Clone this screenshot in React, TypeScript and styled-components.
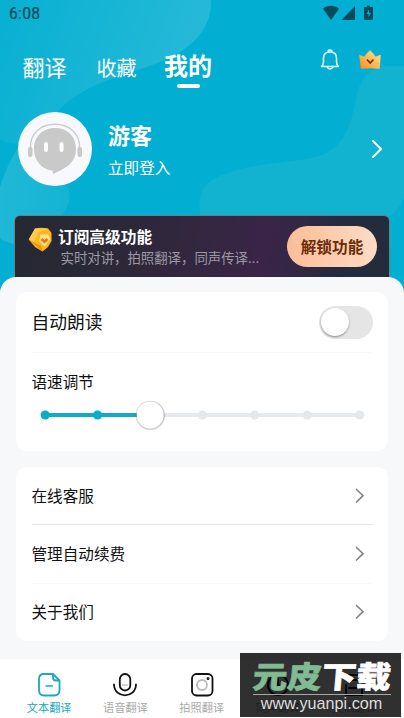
import React from "react";
import styled, { createGlobalStyle } from "styled-components";

const Global = createGlobalStyle`
  * { box-sizing: border-box; }
  html, body { margin: 0; padding: 0; }
  body {
    font-family: "Noto Sans CJK SC", "Noto Sans", sans-serif;
    background: #f7f8fa;
    overflow: hidden;
  }
`;

const Screen = styled.div`
  position: relative;
  display: flex;
  flex-direction: column;
  width: 404px;
  height: 718px;
  overflow: hidden;
  background: #f7f8fa;
`;

const Hero = styled.header`
  position: relative;
  flex: none;
  height: 293px;
  background: #02aed1;
`;

const HeroPattern = styled.svg`
  position: absolute;
  inset: 0;
  width: 404px;
  height: 293px;
`;

const HeroContent = styled.div`
  position: relative;
  display: flex;
  flex-direction: column;
`;

const StatusBar = styled.div`
  display: flex;
  justify-content: space-between;
  height: 28px;
  padding: 0 30px 0 9px;
  color: #064a5c;
`;

const Clock = styled.span`
  font: 400 15.6px/29px Roboto, sans-serif;
  letter-spacing: 0.3px;
  -webkit-text-stroke: 0.2px currentColor;
`;

const StatusIcons = styled.svg`
  width: 52px;
  height: 28px;
`;

const TopNav = styled.nav`
  display: flex;
  align-items: flex-start;
  height: 72px;
  padding: 20px 22px 0 22.5px;
  color: #fff;
`;

const NavTab = styled.div<{ $size: number; $left?: number; $drop?: number; $active?: boolean }>`
  display: flex;
  flex-direction: column;
  align-items: center;
  gap: 3px;
  margin-left: ${(p) => p.$left ?? 0}px;
  padding-top: ${(p) => p.$drop ?? 0}px;
  font-size: ${(p) => p.$size}px;
  font-weight: ${(p) => (p.$active ? 700 : 400)};
  line-height: ${(p) => (p.$active ? 33 : 32)}px;
  white-space: nowrap;
`;

const Underline = styled.i`
  width: 23px;
  height: 4px;
  border-radius: 2px;
  background: #fff;
`;

const NavActions = styled.div`
  display: flex;
  gap: 18px;
  margin-left: auto;
`;

const Profile = styled.section`
  display: flex;
  align-items: flex-start;
  height: 115px;
  padding: 12px 21px 0 18px;
  color: #fff;
`;

const Avatar = styled.svg`
  flex: none;
  width: 74px;
  height: 74px;
`;

const ProfileText = styled.div`
  display: flex;
  flex-direction: column;
  flex: 1;
  margin-left: 16px;
`;

const UserName = styled.strong`
  font-size: 22px;
  line-height: 32px;
  margin-top: 6px;
`;

const LoginHint = styled.span`
  font-size: 15.6px;
  line-height: 24px;
  margin-top: 5px;
`;

const ProfileArrow = styled.svg`
  width: 12px;
  height: 20px;
  margin-top: 27px;
`;

const Promo = styled.section`
  display: flex;
  align-items: flex-start;
  width: 376px;
  height: 78px;
  margin-left: 14px;
  padding: 0 12px 0 13px;
  border: 1px solid #6d7f8a;
  border-radius: 6px 6px 0 0;
  background: linear-gradient(100deg, #252932 0%, #2c2838 30%, #3a2547 66%, #242b3d 88%, #222b3c 100%);
`;

const Gem = styled.svg`
  flex: none;
  width: 26px;
  height: 26px;
  margin-top: 11px;
`;

const PromoText = styled.div`
  display: flex;
  flex-direction: column;
  flex: 1;
  margin-left: 4px;
`;

const PromoTitle = styled.strong`
  margin-top: 10px;
  color: #fff;
  font-size: 15.7px;
  line-height: 22px;
`;

const PromoSub = styled.span`
  padding-left: 2.5px;
  color: #9c98a5;
  font-size: 13.4px;
  line-height: 18px;
  white-space: nowrap;
`;

const UnlockButton = styled.button`
  width: 90px;
  height: 41px;
  margin-top: 10px;
  padding: 0;
  border: 0;
  border-radius: 21px;
  background: linear-gradient(90deg, #fabe98, #fcdcc4);
  color: #6d2d0b;
  font: 700 15.7px/40px "Noto Sans CJK SC", sans-serif;
`;

const Sheet = styled.main`
  position: relative;
  display: flex;
  flex-direction: column;
  flex: 1;
  gap: 16px;
  margin-top: -16px;
  padding: 15px 16px 0;
  border-radius: 16px 16px 0 0;
  background: #f7f8fa;
`;

const Card = styled.section`
  padding: 0 15px 0 15.5px;
  border-radius: 11px;
  background: #fff;
  color: #111;
`;

const SettingsCard = styled(Card)`
  height: 159px;
`;

const ToggleRow = styled.div`
  display: flex;
  align-items: center;
  justify-content: space-between;
  height: 61px;
  border-bottom: 1px solid #f8f8f9;
  font-size: 17.8px;
`;

const Switch = styled.div`
  width: 54px;
  height: 33px;
  padding: 2px;
  border-radius: 17px;
  background: #e5e5e5;
`;

const SwitchKnob = styled.i`
  display: block;
  width: 28px;
  height: 28px;
  border-radius: 50%;
  background: #fff;
  box-shadow: 0 1px 2px #0006;
`;

const SpeedLabel = styled.div`
  height: 24px;
  margin-top: 17px;
  font-size: 15.6px;
  line-height: 22px;
`;

const Slider = styled.svg`
  display: block;
  width: 340px;
  height: 40px;
`;

const MenuCard = styled(Card)`
  height: 174px;
`;

const MenuRow = styled.div<{ $line?: string }>`
  display: flex;
  align-items: center;
  justify-content: space-between;
  height: 58.3px;
  padding-right: 8px;
  border-bottom: 1px solid ${(p) => p.$line ?? "transparent"};
  font-size: 15.6px;
`;

const MenuLabel = styled.span`
  padding-bottom: 2px;
  line-height: 24px;
`;

const MenuArrow = styled.svg`
  width: 10px;
  height: 16px;
`;

const TabBar = styled.nav`
  position: relative;
  display: grid;
  flex: none;
  grid-template-columns: repeat(5, 76.3px);
  height: 59px;
  padding: 12px 0 0 11px;
  background: #fff;
`;

const Tab = styled.div<{ $active?: boolean }>`
  display: flex;
  flex-direction: column;
  align-items: center;
  color: ${(p) => (p.$active ? "#1ba6bd" : "#aaa")};
  font-size: 11.2px;
  line-height: 17px;
`;

const TabIcon = styled.svg`
  width: 28px;
  height: 28px;
`;

const Watermark = styled.aside`
  position: absolute;
  left: 240px;
  top: 653px;
  display: flex;
  flex-direction: column;
  align-items: center;
  width: 161px;
  height: 64px;
  padding: 8px 9px 0 11px;
  background: rgba(0, 0, 0, 0.81);
  color: #fff;
`;

const WatermarkTitle = styled.div`
  height: 34px;
  border-bottom: 1px solid #a3aaa6;
  font-size: 34.5px;
  font-weight: 900;
  line-height: 29px;
  white-space: nowrap;
`;

const Slanted = styled.span<{ $green?: boolean }>`
  display: inline-block;
  color: ${(p) => (p.$green ? "#80bb93" : "#fff")};
  -webkit-text-stroke: 0.7px currentColor;
  transform: skewX(-5deg) scaleY(0.88);
`;

const WatermarkUrl = styled.div`
  color: #ddd;
  font: 16.2px/16px "Liberation Sans", sans-serif;
`;

const menu = [
  { label: "在线客服", line: "#e5e6e7" },
  { label: "管理自动续费", line: "#f8f9f9" },
  { label: "关于我们" },
];

const iconProps = { viewBox: "0 0 28 28", fill: "none", stroke: "#111", strokeWidth: 1.8, strokeLinecap: "round" as const };

export default function App() {
  return (
    <Screen>
      <Global />
      <Hero>
        <HeroPattern viewBox="0 0 404 293">
          <defs>
            <linearGradient id="wave" x1="0" y1="0.3" x2="0.8" y2="0.5">
              <stop offset="0" stopColor="#fff" stopOpacity="0.03" />
              <stop offset="1" stopColor="#fff" stopOpacity="0.13" />
            </linearGradient>
            <linearGradient id="pool" x1="0" y1="0" x2="1" y2="0">
              <stop offset="0" stopColor="#fff" stopOpacity="0.12" />
              <stop offset="1" stopColor="#fff" stopOpacity="0.07" />
            </linearGradient>
          </defs>
          <path d="M0 0H211C212 18 203 36 187 47C168 64 130 70 98 84C70 97 58 109 50 122C40 139 20 151 0 139Z" fill="url(#wave)" />
          <path d="M0 187Q7 165 18 147L55 180C67 183 72 190 69 202C64 220 37 240 14 244Q4 242 0 238Z" fill="url(#pool)" />
          <path d="M404 66H387C370 67 361 78 357 94C352 120 347 144 324 154C300 164 263 160 225 174C202 182 196 197 201 217H389Q397 213 404 198Z" fill="#12b3d0" />
        </HeroPattern>
        <HeroContent>
          <StatusBar>
            <Clock>6:08</Clock>
            <StatusIcons viewBox="0 0 52 28" fill="currentColor">
              <path d="M1 8.7C5.500 4.900 12.500 4.900 17 8.700L9 20Z" />
              <path d="M33 6V20H19.500Z" />
              <path d="M43 7h2V5.800h3V7h2q1 0 1 1v11q0 1-1 1h-7q-1 0-1-1V8q0-1 1-1Z" />
              <path d="M47 9.500L44.500 14H46.500V17.500L49 12.800H47Z" fill="#02aed1" />
            </StatusIcons>
          </StatusBar>
          <TopNav>
            <NavTab $size={22} $drop={2}>翻译</NavTab>
            <NavTab $size={20} $left={30} $drop={4}>收藏</NavTab>
            <NavTab $size={24} $left={27.500} $active>
              我的
              <Underline />
            </NavTab>
            <NavActions>
              <svg width="20" height="24" viewBox="0 0 20 24" fill="none" stroke="#e6ffff" strokeWidth="1.500" strokeLinejoin="round">
                <path d="M1.500 18.500Q3.500 16.500 3.500 14V10Q3.500 4 10 4T16.500 10V14Q16.500 16.500 18.500 18.500Z" />
                <path d="M8 4Q8 2 10 2T12 4M7 19Q8 21 10 21T13 19" />
              </svg>
              <svg width="24" height="24" viewBox="0 0 24 24">
                <defs>
                  <linearGradient id="crown" x1="1" y1="0" x2="0" y2="1">
                    <stop offset="0.300" stopColor="#ffcf70" />
                    <stop offset="1" stopColor="#ff8a18" />
                  </linearGradient>
                </defs>
                <path d="M1.500 7L6.500 9L8.500 6L12 2.500L15.500 6L17.500 9L22.500 7L21.500 20.500Q12 19.500 3 20.500Z" fill="url(#crown)" stroke="url(#crown)" strokeWidth="0.500" strokeLinejoin="round" />
                <path d="M9 11.500L12.200 15L15.500 11.500" fill="none" stroke="#70350a" strokeWidth="1.800" />
              </svg>
            </NavActions>
          </TopNav>
          <Profile>
            <Avatar viewBox="0 0 74 74">
              <circle cx="37" cy="37" r="37" fill="#f7f9fc" />
              <path d="M12.500 37C10 4 64 4 61.500 37" fill="none" stroke="#cdcdcd" strokeWidth="1.500" />
              <rect x="10" y="35" width="4.500" height="10" rx="2" fill="#c9c9c9" />
              <rect x="59.500" y="35" width="4.500" height="10" rx="2" fill="#c9c9c9" />
              <path d="M37 16C23 16 16 26 16 37C16 49 25 58 34 58.500Q35 59 35 62Q44 58 49 54.500C55 50 58 44 58 37C58 26 51 16 37 16Z" fill="#c9c9c9" />
              <rect x="26" y="30" width="4" height="10" rx="2" fill="#fff" />
              <rect x="41.500" y="30" width="4" height="10" rx="2" fill="#fff" />
            </Avatar>
            <ProfileText>
              <UserName>游客</UserName>
              <LoginHint>立即登入</LoginHint>
            </ProfileText>
            <ProfileArrow viewBox="0 0 12 20" fill="none" stroke="#fff" strokeWidth="2" strokeLinecap="round" strokeLinejoin="round">
              <path d="M2 2L10 10L2 18" />
            </ProfileArrow>
          </Profile>
          <Promo>
            <Gem viewBox="0 0 26 26">
              <path d="M7 1.500Q13 0 20 1.500L23.500 6V14L20 20L14.500 24.500L7 20L0.800 12.500Z" fill="#ffb51e" />
              <path d="M7 1.500L0.800 12.500L6 15.500L10 6L20 1.500Z" fill="#ffcb4e" />
              <path d="M0.800 12.500L14.500 24.500L13 19L6 15.500Z" fill="#ef8d18" />
              <path d="M12.500 7.500H20L22.500 12L16.500 19.500L11 14Z" fill="#ffe286" />
              <path d="M13.500 12L16.500 14.800L19.500 12" stroke="#ee701d" strokeWidth="2.600" fill="none" />
            </Gem>
            <PromoText>
              <PromoTitle>订阅高级功能</PromoTitle>
              <PromoSub>实时对讲，拍照翻译，同声传译...</PromoSub>
            </PromoText>
            <UnlockButton>解锁功能</UnlockButton>
          </Promo>
        </HeroContent>
      </Hero>
      <Sheet>
        <SettingsCard>
          <ToggleRow>
            <MenuLabel>自动朗读</MenuLabel>
            <Switch><SwitchKnob /></Switch>
          </ToggleRow>
          <SpeedLabel>语速调节</SpeedLabel>
          <Slider viewBox="0 0 340 40">
            <path d="M13 21H327" stroke="#e7eaec" strokeWidth="4" />
            <path d="M13 21H118" stroke="#13aac5" strokeWidth="4" />
            {[0, 1, 2, 3, 4, 5, 6].map((n) => (
              <circle key={n} cx={13.2 + n * 52.4} cy="21" r="4.600" fill={n < 2 ? "#08adca" : "#e5e8eb"} />
            ))}
            <circle cx="118.400" cy="21.500" r="15" fill="#000" opacity="0.060" />
            <circle cx="118.400" cy="21.300" r="14.400" fill="#000" opacity="0.160" />
            <circle cx="118.100" cy="21" r="13.500" fill="#fff" />
          </Slider>
        </SettingsCard>
        <MenuCard>
          {menu.map((item) => (
            <MenuRow key={item.label} $line={item.line}>
              <MenuLabel>{item.label}</MenuLabel>
              <MenuArrow viewBox="0 0 10 16" fill="none" stroke="#858585" strokeWidth="1.700" strokeLinecap="round">
                <path d="M1.500 1.500L8 7.700L1.500 14" />
              </MenuArrow>
            </MenuRow>
          ))}
        </MenuCard>
      </Sheet>
      <TabBar>
        <Tab $active>
          <TabIcon {...iconProps} stroke="#1ba9c1">
            <path d="M17 3H9Q4 3 4 8V19Q4 24.500 9 24.500H19Q24.500 24.500 24.500 19V9.500L18 3V6.500Q18 9.500 21 9.500H24.500" strokeLinejoin="round" />
            <path d="M11 15H17.500" strokeWidth="1.300" />
          </TabIcon>
          文本翻译
        </Tab>
        <Tab>
          <TabIcon {...iconProps}>
            <rect x="8.800" y="3" width="10.500" height="16.500" rx="5.200" />
            <path d="M3 13.500C3.500 28 24.500 28 25 13.500" />
            <path d="M11.500 14H16.500" stroke="#aaa" strokeWidth="1" />
          </TabIcon>
          语音翻译
        </Tab>
        <Tab>
          <TabIcon {...iconProps}>
            <rect x="4" y="3" width="20.500" height="21.500" rx="4.500" />
            <circle cx="14" cy="14" r="5" stroke="#bbb" />
            <circle cx="20" cy="7.500" r="0.600" />
          </TabIcon>
          拍照翻译
        </Tab>
        <Tab>
          <TabIcon {...iconProps}>
            <circle cx="14" cy="14" r="10" />
            <path d="M14 8V15M10 14H18" />
          </TabIcon>
          同声翻译
        </Tab>
        <Tab>
          <TabIcon {...iconProps}>
            <path d="M4 4H24M7 9H21M6 14V24H22V14M9 17H19" />
          </TabIcon>
          文档翻译
        </Tab>
      </TabBar>
      <Watermark>
        <WatermarkTitle>
          <Slanted $green>元皮</Slanted>
          <Slanted>下载</Slanted>
        </WatermarkTitle>
        <WatermarkUrl>www.yuanpi.com</WatermarkUrl>
      </Watermark>
    </Screen>
  );
}
